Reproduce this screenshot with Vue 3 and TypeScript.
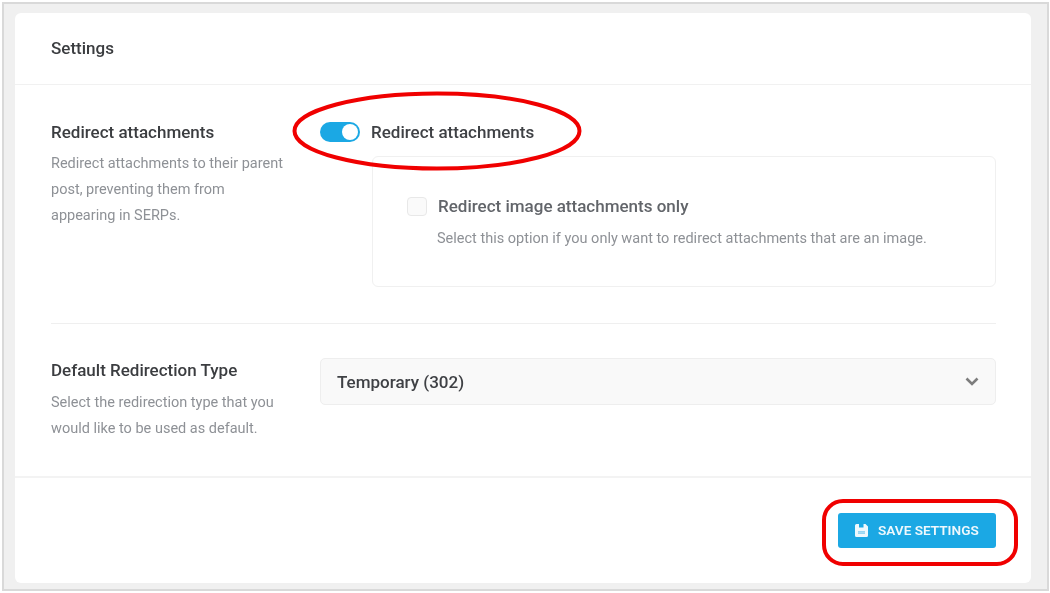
<script setup lang="ts">
const title: string = 'Settings'
</script>

<template>
  <div class="frame">
    <section class="card">
      <header class="head">{{ title }}</header>
      <div class="body">
        <div class="row first">
          <div class="label">
            <h3>Redirect attachments</h3>
            <p>Redirect attachments to their parent post, preventing them from appearing in SERPs.</p>
          </div>
          <div class="control">
            <div class="toggle-line">
              <span class="toggle"><span class="knob"></span></span>
              <span class="toggle-text">Redirect attachments</span>
            </div>
            <div class="nested">
              <div class="check-line">
                <span class="check"></span>
                <span class="check-text">Redirect image attachments only</span>
              </div>
              <p class="check-help">Select this option if you only want to redirect attachments that are an image.</p>
            </div>
          </div>
        </div>
        <div class="row second">
          <div class="label">
            <h3>Default Redirection Type</h3>
            <p>Select the redirection type that you would like to be used as default.</p>
          </div>
          <div class="control">
            <div class="select">
              <span>Temporary (302)</span>
              <svg width="14" height="9" viewBox="0 0 14 9" fill="none">
                <path d="M1.500 1.500 7 7l5.500-5.500" stroke="#7d7d7d" stroke-width="2.600" />
              </svg>
            </div>
          </div>
        </div>
      </div>
      <footer class="foot">
        <button class="save" type="button">
          <svg width="13" height="13" viewBox="0 0 13 13">
            <path fill-rule="evenodd" fill="#eef8fd" d="M1.500 0H10.500l2.500 2.500v9A1.500 1.500 0 0 1 11.500 13h-10A1.500 1.500 0 0 1 0 11.500v-10A1.500 1.500 0 0 1 1.500 0ZM4 0v3.500h4.500V0ZM3 7.500v2h7v-2Z" />
            <path fill="#a9dcf4" d="M3 7.500h7v2H3Z" />
          </svg>
          <span>SAVE SETTINGS</span>
        </button>
      </footer>
    </section>
    <svg class="mark oval" width="296" height="84" viewBox="0 0 296 84" fill="none">
      <ellipse cx="148" cy="42" rx="142.500" ry="37.500" stroke="#f00000" stroke-width="4" />
    </svg>
    <div class="mark box"></div>
  </div>
</template>

<style>
html, body { margin: 0; background: #fff; }
</style>

<style scoped>
.frame {
  position: relative;
  box-sizing: border-box;
  width: 1047px;
  height: 589px;
  margin: 2px 0 0 2px;
  padding: 9px 16px 6px 11px;
  background: #f0f0f0;
  border: 2px solid #d9d9d9;
  font-family: Roboto, "Liberation Sans", sans-serif;
  overflow: hidden;
  filter: blur(0.5px);
}
.card {
  box-sizing: border-box;
  width: 1016px;
  height: 570px;
  display: flex;
  flex-direction: column;
  background: #fff;
  border-radius: 6px;
}
.head {
  box-sizing: border-box;
  height: 72px;
  padding: 25px 36px 0;
  font-size: 17px;
  line-height: 20px;
  font-weight: 500;
  color: #3b3d40;
  border-bottom: 1px solid #f1f1f1;
}
.body {
  box-sizing: border-box;
  height: 393px;
  padding: 0 35px 0 36px;
  border-bottom: 2px solid #f3f3f3;
}
.row { display: flex; }
.first {
  height: 239px;
  padding-top: 36px;
  box-sizing: border-box;
  border-bottom: 1px solid #efefef;
}
.second { padding-top: 34px; }
.label { width: 269px; flex: none; }
.second .label { padding-top: 1px; }
.label h3 {
  margin: 0;
  font-size: 17px;
  line-height: 22px;
  font-weight: 500;
  color: #3b3d40;
}
.label p {
  margin: 8px 0 0;
  font-size: 14.500px;
  line-height: 26px;
  color: #8e9196;
  width: 236px;
}
.second .label p { margin-top: 9px; }
.control { flex: 1; min-width: 0; }
.toggle-line {
  display: flex;
  align-items: center;
  height: 22px;
}
.toggle {
  box-sizing: border-box;
  width: 40px;
  height: 20px;
  display: flex;
  justify-content: flex-end;
  padding: 2px 2px;
  background: #1ba8e4;
  border-radius: 10px;
}
.knob {
  width: 16px;
  height: 16px;
  background: #fff;
  border-radius: 50%;
}
.toggle-text {
  margin-left: 11px;
  font-size: 17px;
  font-weight: 500;
  color: #3f4145;
}
.nested {
  box-sizing: border-box;
  height: 131px;
  margin: 13px 0 0 52px;
  padding: 38px 35px 0 34px;
  border: 1px solid #f0f0f0;
  border-radius: 6px;
}
.check-line { display: flex; align-items: center; height: 22px; }
.check {
  box-sizing: border-box;
  width: 20px;
  height: 19px;
  background: #fafafa;
  border: 1px solid #e8e8e8;
  border-radius: 4px;
}
.check-text {
  margin-left: 11px;
  font-size: 17px;
  font-weight: 500;
  color: #62656a;
}
.check-help {
  margin: 11px 0 0 30px;
  font-size: 14.500px;
  line-height: 22px;
  color: #8e9196;
}
.select {
  box-sizing: border-box;
  height: 47px;
  display: flex;
  align-items: center;
  justify-content: space-between;
  padding: 0 16px 0 16px;
  background: #f9f9f9;
  border: 1px solid #eeeeee;
  border-radius: 5px;
  font-size: 17px;
  font-weight: 500;
  color: #3f4145;
}
.foot {
  display: flex;
  justify-content: flex-end;
  padding: 35px 35px 0 0;
}
.save {
  box-sizing: border-box;
  width: 158px;
  height: 35px;
  display: flex;
  align-items: center;
  gap: 10px;
  padding: 0 0 0 17px;
  border: 0;
  border-radius: 3px;
  background: #1ba8e4;
  color: #eef8fd;
  font-family: inherit;
  font-size: 13.600px;
  font-weight: 600;
}
.save span { position: relative; top: -1px; }
.mark { position: absolute; pointer-events: none; }
.oval { left: 285px; top: 85px; }
.box {
  left: 818px;
  top: 495px;
  width: 196px;
  height: 67px;
  box-sizing: border-box;
  border: 4px solid #f00000;
  border-radius: 21px;
}
</style>
